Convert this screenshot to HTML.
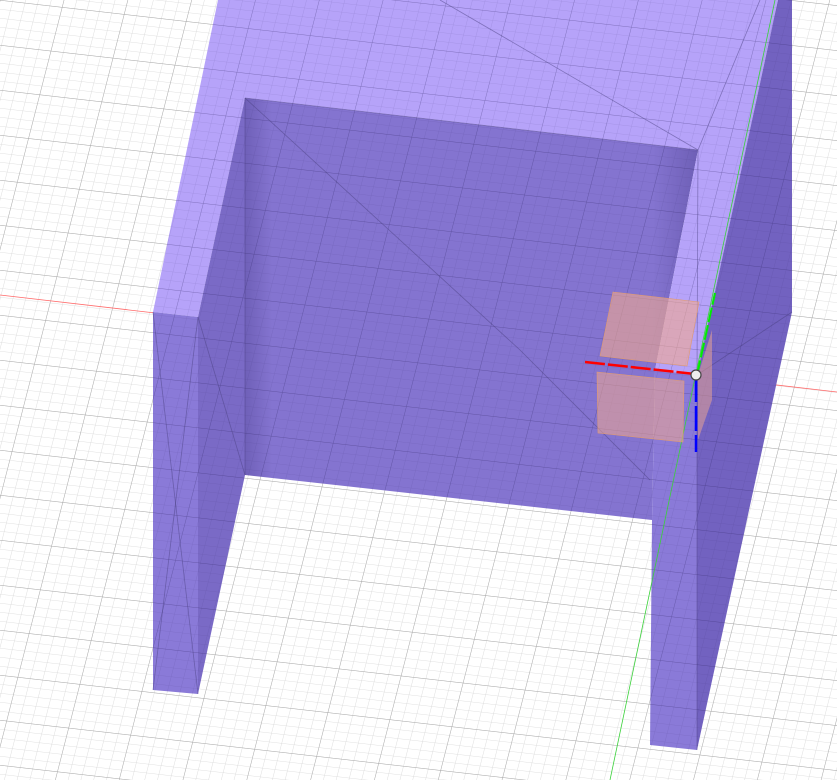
<!DOCTYPE html>
<html><head><style>html,body{margin:0;padding:0;background:#fff;width:837px;height:780px;overflow:hidden}</style></head>
<body>
<svg width="837" height="780" viewBox="0 0 837 780" xmlns="http://www.w3.org/2000/svg">
<defs>
<pattern id="g" width="12.4" height="9" patternUnits="userSpaceOnUse" patternTransform="skewY(6.5) skewX(-14)">
<path d="M0 0H12.4M0 0V9" stroke="#d6d6d6" stroke-width="0.8" fill="none"/>
</pattern>
<pattern id="G" width="62" height="45" patternUnits="userSpaceOnUse" patternTransform="skewY(6.5) skewX(-14)">
<path d="M0 0H62M0 0V45" stroke="#a8a8a8" stroke-width="0.9" fill="none"/>
</pattern>
<pattern id="pg" width="12.4" height="9" patternUnits="userSpaceOnUse" patternTransform="skewY(6.5) skewX(-14)">
<path d="M0 0H12.4M0 0V9" stroke="#2a2060" stroke-opacity="0.16" stroke-width="0.8" fill="none"/>
</pattern>
<pattern id="pG" width="62" height="45" patternUnits="userSpaceOnUse" patternTransform="skewY(6.5) skewX(-14)">
<path d="M0 0H62M0 0V45" stroke="#2a2060" stroke-opacity="0.3" stroke-width="0.9" fill="none"/>
</pattern>
<linearGradient id="bw" x1="0" y1="0" x2="1" y2="0">
<stop offset="0" stop-color="#6f60b8"/><stop offset="0.06" stop-color="#8474d0"/><stop offset="0.9" stop-color="#8474d0"/><stop offset="1" stop-color="#6e5fb6"/>
</linearGradient>
</defs>
<rect width="837" height="780" fill="#fff"/>
<rect width="837" height="780" fill="url(#g)"/>
<rect width="837" height="780" fill="url(#G)"/>
<line x1="0" y1="295" x2="837" y2="392" stroke="#ff6a6a" stroke-width="0.8"/>
<polygon points="245,98 698,150 655,370 652,520 245,475" fill="url(#bw)"/>
<polygon points="218,0 778,0 697,375 655,370 698,150 245,98 198,317 153,312" fill="#b6a3f9"/>
<polygon points="245,98 245,475 198,694 198,317" fill="#7a6ac6"/>
<polygon points="153,312 198,317 198,694 153,690" fill="#8a7ad8"/>
<polygon points="655,370 697,375 697,750 650,745 652,520" fill="#8a7ad8"/>
<polygon points="778,0 792,0 792,312 697,750 697,375" fill="#7262c0"/>
<polygon points="218,0 792,0 792,312 697,750 650,745 652,520 245,475 198,694 153,690 153,312" fill="url(#pg)"/>
<polygon points="218,0 792,0 792,312 697,750 650,745 652,520 245,475 198,694 153,690 153,312" fill="url(#pG)"/>
<g stroke="#4a3f80" stroke-opacity="0.5" stroke-width="0.8" fill="none">
<line x1="245" y1="98" x2="698" y2="150"/>
<line x1="245" y1="98" x2="245" y2="475"/>
<line x1="245" y1="98" x2="520" y2="350"/>
<line x1="440" y1="0" x2="698" y2="150"/>
<line x1="698" y1="150" x2="760" y2="0"/>
<line x1="698" y1="150" x2="697" y2="375"/>
<line x1="153" y1="312" x2="198" y2="694"/>
<line x1="198" y1="317" x2="153" y2="690"/>
<line x1="198" y1="317" x2="245" y2="475"/>
<line x1="697" y1="375" x2="792" y2="312"/>
<line x1="697" y1="375" x2="697" y2="750"/>
<line x1="520" y1="350" x2="650" y2="480"/>
</g>
<line x1="775" y1="0" x2="610" y2="780" stroke="#3ad13a" stroke-width="0.8"/>
<polygon points="613,292 699,302 687,366 600,356" fill="#f0a890" fill-opacity="0.6" stroke="#e09a70" stroke-width="0.6"/>
<polygon points="597,372 684,381 683,442 598,433" fill="#f0a890" fill-opacity="0.55" stroke="#e09a70" stroke-width="0.6"/>
<polygon points="698,375 712,330 712,400 698,440" fill="#f0a890" fill-opacity="0.5"/>
<line x1="585" y1="362" x2="695" y2="374" stroke="#ff0000" stroke-width="2.5" stroke-dasharray="20,3"/>
<line x1="697" y1="375" x2="715" y2="293" stroke="#00ee00" stroke-width="2" stroke-dasharray="15,3"/>
<line x1="696" y1="377" x2="696" y2="452" stroke="#0000ff" stroke-width="2.5" stroke-dasharray="25,4"/>
<circle cx="696" cy="375" r="5" fill="#eee" stroke="#444" stroke-width="1.2"/>
</svg>
</body></html>
